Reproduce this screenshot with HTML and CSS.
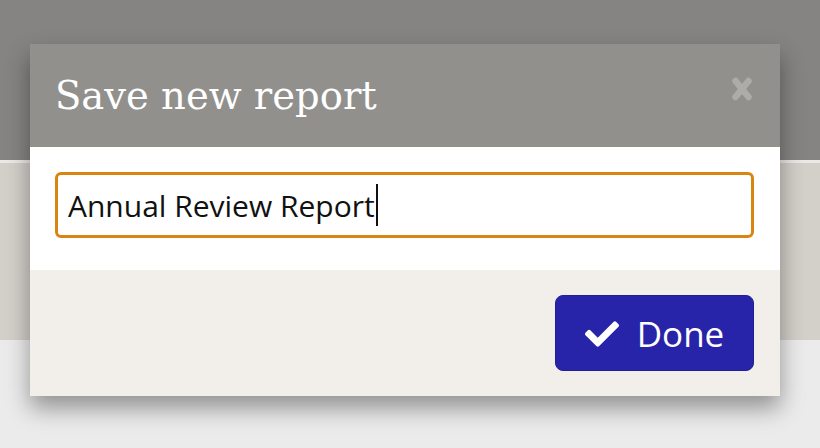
FILE: index.html
```html
<html>
<head>
<title>Save new report</title>
<link rel="stylesheet" href="styles.css">
</head>
<body>
<div class="page">
  <div class="band-top"></div>
  <div class="band-mid"></div>
  <div class="band-low"></div>
</div>

<div class="modal">
  <div class="modal-head">
    <h2 class="modal-title">Save new report</h2>
    <span class="modal-close">
      <svg width="20" height="24" viewBox="0 0 20 24">
        <path d="M3.5 4 L16.5 20 M16.5 4 L3.5 20" stroke="#adaca8" stroke-width="6.5" stroke-linecap="round"/>
      </svg>
    </span>
  </div>
  <div class="modal-body">
    <div class="text-field">Annual Review Report<span class="caret"></span></div>
  </div>
  <div class="modal-foot">
    <button class="btn-done" type="button">
      <svg class="check" width="34" height="28" viewBox="0 0 512 420">
        <path fill="#ffffff" d="M173.9 408.4l-166.4-166.4c-10-10-10-26.2 0-36.2l36.2-36.2c10-10 26.2-10 36.2 0L192 281.7 432.1 41.6c10-10 26.2-10 36.2 0l36.2 36.2c10 10 10 26.2 0 36.2l-294.4 294.4c-10 10-26.2 10-36.2 0z"/>
      </svg>
      <span>Done</span>
    </button>
  </div>
</div>
</body>
</html>
```

FILE: styles.css
```css
body {
  margin: 0;
  font-family: "Open Sans", "DejaVu Sans", sans-serif;
  background-color: #ebebeb;
}
.band-top {
  height: 160px;
  background-color: #858482;
  border-bottom: 3px solid #ebe9e6;
}
.band-mid {
  height: 177px;
  background-color: #d3cfc9;
}
.modal {
  position: absolute;
  left: 30px;
  top: 44px;
  width: 750px;
  box-shadow: 0 12px 22px rgba(0, 0, 0, 0.38);
}
.modal-head {
  height: 103px;
  background-color: #91908d;
  display: flex;
  align-items: center;
  justify-content: space-between;
  padding: 0 28px 0 25px;
}
.modal-title {
  margin: 0;
  font-family: "DejaVu Serif", serif;
  font-weight: normal;
  font-size: 38.5px;
  color: #ffffff;
}
.modal-close {
  display: flex;
  margin-top: -14px;
}
.modal-body {
  background-color: #ffffff;
  padding: 25px 26px 32px 25px;
}
.text-field {
  height: 60px;
  border: 3px solid #d8860f;
  border-radius: 6px;
  padding: 0 10px;
  display: flex;
  align-items: center;
  font-size: 30px;
  color: #111111;
}
.caret {
  display: inline-block;
  width: 2px;
  height: 42px;
  background-color: #111111;
  margin-left: 1px;
}
.modal-foot {
  background-color: #f2efea;
  padding: 25px 26px 25px 25px;
  display: flex;
  justify-content: flex-end;
}
.btn-done {
  width: 199px;
  height: 76px;
  background-color: #2824aa;
  border: 1px solid #221f96;
  border-radius: 8px;
  color: #ffffff;
  font-family: "Open Sans", sans-serif;
  font-size: 35px;
  display: flex;
  align-items: center;
  justify-content: center;
  gap: 18px;
  padding: 0;
}
.check {
  display: block;
}
```
